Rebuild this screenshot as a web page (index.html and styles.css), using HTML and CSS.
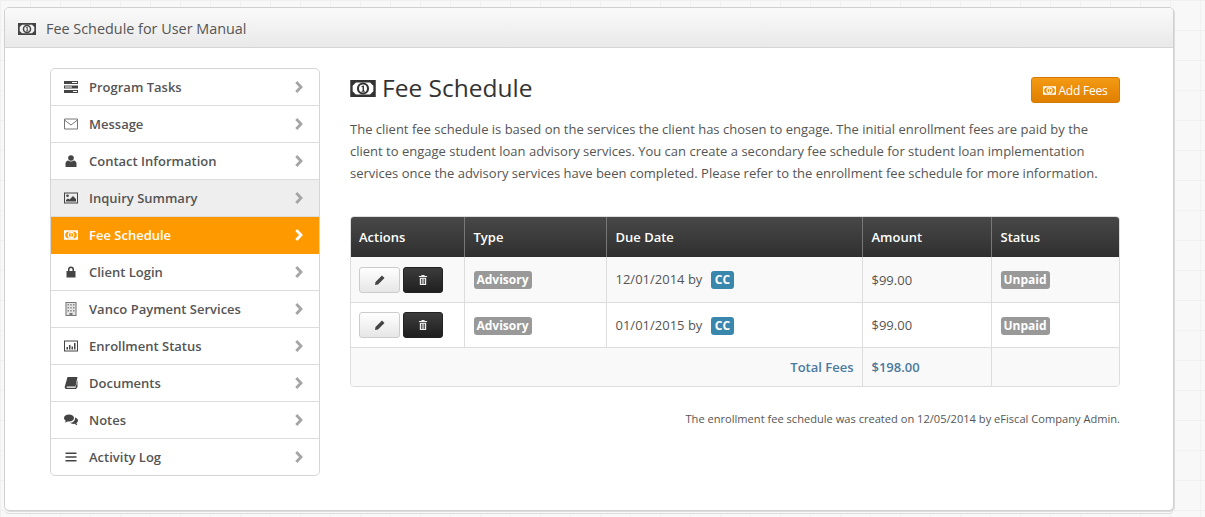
FILE: index.html
```html
<!DOCTYPE html>
<html lang="en">
<head>
<meta charset="utf-8">
<title>Fee Schedule for User Manual</title>
<link rel="stylesheet" href="styles.css">
</head>
<body>
<svg class="defs" width="0" height="0" aria-hidden="true">
  <symbol id="money" viewBox="0 0 18 12">
    <path fill-rule="evenodd" d="M0 0h18v12H0zM4 1.700 1.700 4v4L4 10.300h10L16.300 8V4L14 1.700z"/>
    <path fill-rule="evenodd" d="M9 1.700a4.300 4.300 0 1 1 0 8.600 4.300 4.300 0 0 1 0-8.600zM9 3.200a2.800 2.800 0 1 0 0 5.600 2.800 2.800 0 0 0 0-5.600z"/>
    <path d="M8 4.300 9.700 3.900v3.600h.6v.8H8v-.8h.7V5L8 5.100z"/>
  </symbol>
  <symbol id="tasks" viewBox="0 0 14 12">
    <path d="M0 0h14v3H0zM0 4.500h14v3H0zM0 9h14v3H0z"/>
    <path fill="#fff" d="M8 1h5v1H8zM1 5.500h7v1H1zM9 10h4v1H9z"/>
  </symbol>
  <symbol id="mail" viewBox="0 0 14 11">
    <path fill="none" stroke="#777" d="M.5.500h13v10H.500zM.5 1.500 7 6.500l6.500-5"/>
  </symbol>
  <symbol id="user" viewBox="0 0 11 12">
    <circle cx="5.500" cy="3" r="2.800"/>
    <path d="M0 12V8.500C0 6.800 1.500 5.700 2.800 5.500c1.500 1.200 3.900 1.200 5.400 0C9.500 5.700 11 6.800 11 8.500V12z"/>
  </symbol>
  <symbol id="picture" viewBox="0 0 14 11">
    <path fill-rule="evenodd" d="M0 0h14v11H0zM1 1v9h12V1z"/>
    <circle cx="3.500" cy="3.200" r="1.300"/>
    <path d="M2 9V7.500l2-1.500 1.500 1L9 3.500 12 6.500V9z"/>
  </symbol>
  <symbol id="lock" viewBox="-2.500 0 14 11">
    <path fill-rule="evenodd" d="M1.500 4.500V3a3 3 0 0 1 6 0v1.500H9V11H0V4.500zM3 4.500h3V3a1.500 1.500 0 0 0-3 0z"/>
  </symbol>
  <symbol id="building" viewBox="0 0 11 14">
    <path fill="#e4e4e4" d="M0 0h11v14H0z"/>
    <path fill-rule="evenodd" fill="#777" d="M0 0h11v14H0zM1 1v12h3v-2h3v2h3V1z"/>
    <path fill="#888" d="M2 2h1.500v1.500H2zM4.750 2h1.500v1.500h-1.500zM7.500 2H9v1.500H7.500zM2 5h1.500v1.500H2zM4.750 5h1.500v1.500h-1.500zM7.500 5H9v1.500H7.500zM2 8h1.500v1.500H2zM4.750 8h1.500v1.500h-1.500zM7.500 8H9v1.500H7.500z"/>
  </symbol>
  <symbol id="chart" viewBox="0 0 14 11">
    <path fill-rule="evenodd" d="M0 0h14v11H0zM1 1v9h12V1z"/>
    <path d="M2.500 6.500h1.500V9H2.500zM5 4.500h1.500V9H5zM7.500 6h1.500v3H7.500zM10 2.500h1.500V9H10z"/>
  </symbol>
  <symbol id="book" viewBox="0 0 13 12">
    <path d="M3 0h10l-2 9.500H2.800c-1 0-1 1.300 0 1.300H11L13 3v7l-1.500 2H2C.5 12 0 10.800.3 9.500z"/>
  </symbol>
  <symbol id="comments" viewBox="0 0 14 11">
    <path d="M5 0c2.800 0 5 1.500 5 3.500S7.800 7 5 7c-.6 0-1 0-1.500-.1C2.700 7.600 1.600 8 .8 8c.6-.6.900-1.300 1-1.800C.7 5.500 0 4.600 0 3.500 0 1.500 2.200 0 5 0z"/>
    <path d="M11 3c1.800.5 3 1.700 3 3.100 0 1-.6 1.900-1.600 2.500.1.700.5 1.500 1 2-.9 0-2-.5-2.800-1.300-.4.100-.8.100-1.200.1-1.400 0-2.600-.4-3.500-1.100C9 8.300 11.500 6.100 11 3z"/>
  </symbol>
  <symbol id="bars" viewBox="-1.500 -1.500 14 12">
    <path d="M0 0h11v1.500H0zM0 3.700h11v1.500H0zM0 7.500h11V9H0z"/>
  </symbol>
  <symbol id="chevron" viewBox="0 0 8 12">
    <path fill="none" stroke="currentColor" stroke-width="2.800" d="M1.300 1 6 6l-4.700 5"/>
  </symbol>
  <symbol id="pencil" viewBox="0 0 10 10">
    <path d="M7 .5 9.500 3 3 9.500 0 10l.5-3z"/>
  </symbol>
  <symbol id="trash" viewBox="0 0 9 11">
    <path fill-rule="evenodd" d="M3 0h3l.5 1H9v1.300H0V1h2.500zM1 3h7v8H1zM2.500 4v6h.8V4zM4.100 4v6h.8V4zM5.700 4v6h.8V4z"/>
  </symbol>
</svg>

<div class="widget">
  <header class="widget-head">
    <svg class="ico-head"><use href="#money"/></svg>
    <span>Fee Schedule for User Manual</span>
  </header>
  <div class="widget-body">
    <nav class="side">
      <a class="side-item"><svg class="ico"><use href="#tasks"/></svg><span class="side-label">Program Tasks</span><svg class="chev"><use href="#chevron"/></svg></a>
      <a class="side-item"><svg class="ico"><use href="#mail"/></svg><span class="side-label">Message</span><svg class="chev"><use href="#chevron"/></svg></a>
      <a class="side-item"><svg class="ico"><use href="#user"/></svg><span class="side-label">Contact Information</span><svg class="chev"><use href="#chevron"/></svg></a>
      <a class="side-item hover"><svg class="ico"><use href="#picture"/></svg><span class="side-label">Inquiry Summary</span><svg class="chev"><use href="#chevron"/></svg></a>
      <a class="side-item active"><svg class="ico"><use href="#money"/></svg><span class="side-label">Fee Schedule</span><svg class="chev"><use href="#chevron"/></svg></a>
      <a class="side-item"><svg class="ico"><use href="#lock"/></svg><span class="side-label">Client Login</span><svg class="chev"><use href="#chevron"/></svg></a>
      <a class="side-item"><svg class="ico ico-tall"><use href="#building"/></svg><span class="side-label">Vanco Payment Services</span><svg class="chev"><use href="#chevron"/></svg></a>
      <a class="side-item"><svg class="ico"><use href="#chart"/></svg><span class="side-label">Enrollment Status</span><svg class="chev"><use href="#chevron"/></svg></a>
      <a class="side-item"><svg class="ico"><use href="#book"/></svg><span class="side-label">Documents</span><svg class="chev"><use href="#chevron"/></svg></a>
      <a class="side-item"><svg class="ico"><use href="#comments"/></svg><span class="side-label">Notes</span><svg class="chev"><use href="#chevron"/></svg></a>
      <a class="side-item"><svg class="ico"><use href="#bars"/></svg><span class="side-label">Activity Log</span><svg class="chev"><use href="#chevron"/></svg></a>
    </nav>
    <main class="main">
      <div class="title-row">
        <h1 class="title"><svg class="ico-title"><use href="#money"/></svg>Fee Schedule</h1>
        <button class="add-btn"><svg class="ico-add"><use href="#money"/></svg>Add Fees</button>
      </div>
      <p class="intro">The client fee schedule is based on the services the client has chosen to engage. The initial enrollment fees are paid by the client to engage student loan advisory services. You can create a secondary fee schedule for student loan implementation services once the advisory services have been completed. Please refer to the enrollment fee schedule for more information.</p>
      <div class="table-wrap">
        <table class="fees">
          <colgroup><col class="c1"><col class="c2"><col class="c3"><col class="c4"><col class="c5"></colgroup>
          <thead>
            <tr><th>Actions</th><th>Type</th><th>Due Date</th><th>Amount</th><th>Status</th></tr>
          </thead>
          <tbody>
            <tr class="odd">
              <td class="actions"><button class="btn-edit"><svg class="ico-btn"><use href="#pencil"/></svg></button><button class="btn-del"><svg class="ico-btn"><use href="#trash"/></svg></button></td>
              <td><span class="label">Advisory</span></td>
              <td>12/01/2014 by <span class="label cc">CC</span></td>
              <td>$99.00</td>
              <td><span class="label">Unpaid</span></td>
            </tr>
            <tr>
              <td class="actions"><button class="btn-edit"><svg class="ico-btn"><use href="#pencil"/></svg></button><button class="btn-del"><svg class="ico-btn"><use href="#trash"/></svg></button></td>
              <td><span class="label">Advisory</span></td>
              <td>01/01/2015 by <span class="label cc">CC</span></td>
              <td>$99.00</td>
              <td><span class="label">Unpaid</span></td>
            </tr>
          </tbody>
          <tfoot>
            <tr><td colspan="3" class="total-label">Total Fees</td><td class="total">$198.00</td><td></td></tr>
          </tfoot>
        </table>
      </div>
      <p class="created">The enrollment fee schedule was created on 12/05/2014 by eFiscal Company Admin.</p>
    </main>
  </div>
</div>
</body>
</html>
```
FILE: styles.css
```css
* { box-sizing: border-box; }
html, body { height: 100%; }
body {
  margin: 0;
  padding: 7px 31px 0 4px;
  overflow: hidden;
  font-family: "Open Sans", sans-serif;
  font-size: 13px;
  color: #555;
  background-color: #f8f8f8;
  background-image:
    linear-gradient(#f0f0f0 1px, transparent 1px),
    linear-gradient(90deg, #f0f0f0 1px, transparent 1px);
  background-size: 30px 30px;
}
.defs { position: absolute; }
svg { fill: currentColor; flex: none; }

.widget {
  height: 504px;
  background: #fff;
  border: 1px solid #d0d0d0;
  border-radius: 5px;
  box-shadow: 1px 1px 0 #ddd, 0 3px 0 -1px #f8f8f8, 0 4px 0 -1px #ddd;
}
.widget-head {
  height: 40px;
  display: flex;
  align-items: center;
  padding: 2px 0 0 13px;
  font-size: 14.400px;
  color: #555;
  background: linear-gradient(#fafafa, #e9e9e9);
  border-bottom: 1px solid #d5d5d5;
  border-radius: 4px 4px 0 0;
}
.ico-head { width: 18px; height: 12px; margin-right: 10px; color: #444; }

.widget-body {
  display: flex;
  gap: 30px;
  padding: 20px 53px 0 45px;
}

.side {
  width: 270px;
  flex: none;
  display: flex;
  flex-direction: column;
  border: 1px solid #d5d5d5;
  border-radius: 5px;
  overflow: hidden;
}
.side-item {
  height: 37px;
  display: flex;
  align-items: center;
  padding: 0 16px 0 13px;
  font-weight: 600;
  color: #555;
  border-bottom: 1px solid #dcdcdc;
}
.side-item:last-child { border-bottom: 0; height: 36px; }
.side-item.hover { background: #eee; }
.side-item.active { background: #f90; color: #fff; border-bottom-color: #f90; }
.ico { width: 14px; height: 12px; color: #444; }
.ico-tall { height: 14px; }
.active .ico { color: #fff; }
.side-label { flex: 1; margin-left: 11px; }
.chev { width: 8px; height: 12px; color: #a5a5a5; }
.active .chev { color: #fff; }

.main { flex: 1; min-width: 0; }
.title-row {
  display: flex;
  justify-content: space-between;
  align-items: flex-start;
  height: 50px;
}
.title {
  margin: 2px 0 0;
  display: flex;
  align-items: center;
  font-size: 24.500px;
  font-weight: 400;
  line-height: 36px;
  color: #333;
}
.ico-title { width: 26px; height: 17px; margin-right: 6px; color: #333; }
.add-btn {
  width: 89px;
  height: 26px;
  margin-top: 9px;
  display: flex;
  align-items: center;
  justify-content: center;
  padding: 0;
  font: 400 12px "Open Sans", sans-serif;
  letter-spacing: -.2px;
  color: #fff;
  background: linear-gradient(#f49a14, #e07f00);
  border: 1px solid #d57a04;
  border-radius: 3px;
}
.ico-add { width: 13px; height: 9px; margin-right: 2px; }
.intro {
  margin: 0;
  font-size: 13px;
  line-height: 22px;
  color: #555;
}

.table-wrap {
  margin-top: 32px;
  border: 1px solid #ddd;
  border-radius: 4px;
  overflow: hidden;
}
.fees {
  width: 100%;
  table-layout: fixed;
  border-collapse: collapse;
}
.c1 { width: 113px; }
.c2 { width: 142px; }
.c3 { width: 256px; }
.c4 { width: 129px; }
.fees th, .fees td {
  padding: 0 8px 0 9px;
  text-align: left;
  border-left: 1px solid #ddd;
  vertical-align: middle;
}
.fees th:first-child, .fees td:first-child { border-left: 0; padding-left: 8px; }
.fees th {
  height: 40px;
  font-weight: 600;
  color: #fff;
  background: linear-gradient(#484848, #2f2f2f);
  border-left-color: #777;
}
.fees tbody td { height: 45px; padding-top: 1px; border-bottom: 1px solid #ddd; }
.fees tbody .odd td { background: #f9f9f9; }
.fees tfoot td { height: 39px; background: #f9f9f9; }
.fees tfoot .total-label { text-align: right; }
.total-label, .total { font-weight: 600; color: #4c7a9e; }

.actions { white-space: nowrap; font-size: 0; }
.btn-edit, .btn-del {
  width: 41px;
  height: 26px;
  padding: 0;
  display: inline-flex;
  align-items: center;
  justify-content: center;
  vertical-align: middle;
  border-radius: 3px;
}
.btn-edit {
  color: #444;
  background: linear-gradient(#fff, #e6e6e6);
  border: 1px solid #ccc;
}
.btn-del {
  margin-left: 3px;
  width: 40px;
  color: #eee;
  background: linear-gradient(#3c3c3c, #1f1f1f);
  border: 1px solid #222;
}
.ico-btn { width: 10px; height: 10px; }

.label {
  display: inline-block;
  padding: 0 3px;
  font-size: 12px;
  font-weight: 700;
  line-height: 18px;
  color: #fff;
  background: #999;
  border-radius: 3px;
}
.label.cc { margin-left: 5px; padding: 0 4px; background: #3a87ad; }

.created {
  margin: 24px 0 0;
  text-align: right;
  font-size: 11.100px;
  line-height: 16px;
  color: #555;
}
```
